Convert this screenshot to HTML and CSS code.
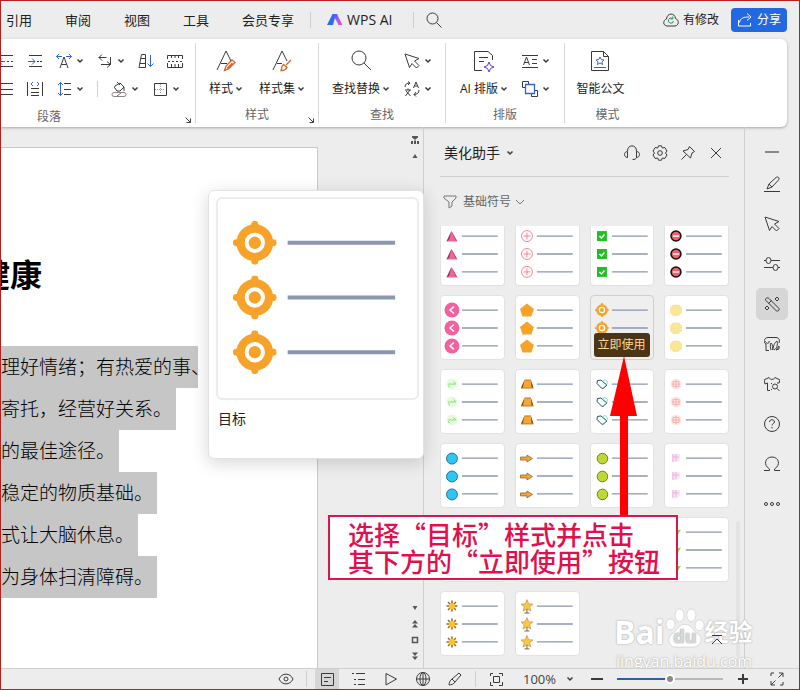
FILE: index.html
```
<!DOCTYPE html>
<html lang="zh-CN">
<head>
  <meta charset="UTF-8">
  <meta name="viewport" content="width=device-width, initial-scale=1.0">
  <title>美化助手</title>
  <link rel="stylesheet" href="styles.css">
</head>
<body>
  <!-- shared symbols -->
  <svg class="sprite" aria-hidden="true">
    <symbol id="chev" viewBox="0 0 8 8"><path d="M1.500 2.500 4 5 6.500 2.500" stroke-width="1.500"/></symbol>
    <symbol id="search" viewBox="0 0 16 16"><circle cx="6.500" cy="6.500" r="5.500"/><path d="M10.500 10.500 15.500 15.500"/></symbol>
    <symbol id="cursor" viewBox="0 0 16 16"><path d="M1 1 15 5.500 10.500 8 15 12.500 12.500 15 8 10.500 5.500 14.500Z"/></symbol>
    <symbol id="s-triangle" viewBox="0 0 16 16"><path d="M7.500 3 13.500 13.500H2.500Z" fill="#f0649a"/><path d="M7.500 3 2.500 13.500 5 12Z" fill="#8e3558"/><path d="M7.500 3 13.500 13.500 11 12Z" fill="#c64e80"/></symbol>
    <symbol id="s-plus" viewBox="0 0 16 16"><g fill="none" stroke="#f0858c"><circle cx="8" cy="8" r="5.500"/><path d="M8 4.500V11.500M4.500 8H11.500"/></g></symbol>
    <symbol id="s-check" viewBox="0 0 16 16"><path d="M3 3H13V13H3Z" fill="#1fc01f"/><path d="M5.500 8 7.500 10 10.500 6.500" fill="none" stroke="#fff" stroke-width="1.500"/></symbol>
    <symbol id="s-minus" viewBox="0 0 16 16"><circle cx="8" cy="8" r="5" fill="#f0606a" stroke="#1b0d0d" stroke-width="1.500"/><path d="M5 8H11" stroke="#fff" stroke-width="1.500"/></symbol>
    <symbol id="s-left" viewBox="0 0 16 16"><circle cx="8" cy="8" r="7.500" fill="#f2609f"/><path d="M10 4.500 6 8 10 11.500" fill="none" stroke="#fff" stroke-width="1.500"/></symbol>
    <symbol id="s-penta" viewBox="0 0 16 16"><path d="M8 1.500 15 7 12.500 14.500H3.500L1 7Z" fill="#f7a229"/></symbol>
    <symbol id="s-target" viewBox="0 0 44 44"><g fill="#f7a229"><circle cx="22" cy="22" r="18.500"/><circle cx="22" cy="3.500" r="3.500"/><circle cx="22" cy="40.500" r="3.500"/><circle cx="3.500" cy="22" r="3.500"/><circle cx="40.500" cy="22" r="3.500"/></g><circle cx="22" cy="22" r="8.200" fill="none" stroke="#fff" stroke-width="4"/></symbol>
    <symbol id="s-hex" viewBox="0 0 16 16"><path d="M5 3H11L13.500 6V10.500L10.500 13.500H5L2.500 10.500V6Z" fill="#fbe596" stroke="#f3dc8d" stroke-width=".6"/></symbol>
    <symbol id="s-leaf" viewBox="0 0 16 16"><circle cx="8" cy="8" r="5.500" fill="#e6fbdc"/><path d="M4 8H12M9.500 5.500 12 8M4 9.500 6 11" fill="none" stroke="#8ddc7a"/></symbol>
    <symbol id="s-trap" viewBox="0 0 16 16"><path d="M5.500 4H12L14.500 12H2Z" fill="#f8a63a"/><path d="M5.500 4 2 12 4 11.500ZM12 4 14.500 12 12.500 11Z" fill="#7a4c14"/><path d="M5.500 4H12M2 12H14.500" stroke="#b97821"/></symbol>
    <symbol id="s-heart" viewBox="0 0 16 16"><path d="M3 7.500 3.500 4.500 7 4 13 9 9 12.500 7.500 12Z" fill="#f0fffb" stroke="#24505a"/><path d="M8.500 5 11 3.500 13.500 5.500 13 8.500" fill="none" stroke="#7fe0c8"/></symbol>
    <symbol id="s-face" viewBox="0 0 16 16"><circle cx="8" cy="8" r="5.500" fill="#fde6e4"/><path d="M5 5.500H11V10.500H5ZM4 8H12M8 4V12" fill="none" stroke="#f5aaa6" stroke-width=".8"/></symbol>
    <symbol id="s-blue" viewBox="0 0 16 16"><circle cx="8" cy="8.500" r="5.500" fill="#2dc6f5" stroke="#2a7390"/></symbol>
    <symbol id="s-arrow" viewBox="0 0 16 16"><path d="M1.500 7H8V5L13.500 8.500 8 12V10H1.500Z" fill="#f5a53a" stroke="#9a6422" stroke-width=".8"/></symbol>
    <symbol id="s-lime" viewBox="0 0 16 16"><circle cx="8.500" cy="8.500" r="5.300" fill="#bdd935" stroke="#6d7c28"/></symbol>
    <symbol id="s-pink" viewBox="0 0 16 16"><path d="M4 4H12V10L9 12H4Z" fill="#fbe4f6"/><path d="M5 4V12M8 4V11M5 7H11" fill="none" stroke="#eeaee0"/></symbol>
    <symbol id="s-green" viewBox="0 0 16 16"><path d="M3 8 13 5.500 10 11Z" fill="#8ccf5e"/></symbol>
    <symbol id="s-sun" viewBox="0 0 16 16"><path d="M8 2.500V13.500M2.500 8H13.500M4 4 12 12M12 4 4 12" stroke="#9b6420" stroke-width="1.500"/><circle cx="8" cy="8" r="3.200" fill="#fcc22c"/></symbol>
    <symbol id="s-star" viewBox="0 0 16 16"><path d="M8 1.500 9.800 5.800 14 6 10.700 9 12 13 8 11 4 13 5.300 9 2 6 6.200 5.800Z" fill="#fbc54c" stroke="#b58a3a" stroke-width=".6"/><path d="M8 11V15M5.500 15H10.500" stroke="#75684c"/></symbol>
  </svg>

  <div class="app">
    <header class="topbar">
      <nav class="menu">
        <a href="#">引用</a>
        <a href="#">审阅</a>
        <a href="#">视图</a>
        <a href="#">工具</a>
        <a href="#">会员专享</a>
      </nav>
      <a href="#" class="wps-ai">
        <svg width="16" height="14" viewBox="0 0 16 14"><defs><linearGradient id="ai" x1="0" x2="1" y1="0" y2="1"><stop offset="0" stop-color="#3b5cf5"/><stop offset=".5" stop-color="#a05cf5"/><stop offset="1" stop-color="#fb4fa6"/></linearGradient></defs><path d="M5.500 1H9L6 12H0Z" fill="#2d6df6"/><path d="M5.500 1H10L15.500 12H11.500L9 7Z" fill="url(#ai)"/></svg>
        WPS AI
      </a>
      <button class="tool search" aria-label="搜索"><svg class="i16"><use href="#search"/></svg></button>
      <span class="saved">
        <svg class="i16" viewBox="0 0 16 16"><path d="M4 14C-.5 13.500 0 8 3.500 7 4 .5 12 .5 12.500 6.500 16.500 8 16 13.500 12 14Z"/><g stroke="#1c9b5e"><path d="M10.500 9A2.600 2.600 0 1 1 9.500 6.500M9.800 4.500V7H7.500"/></g></svg>
        有修改
      </span>
      <button class="share">
        <svg class="i16" viewBox="0 0 16 16"><path d="M1.500 8V14H13.500V11M2.500 10.500C3 6 7 5 12 5M10 1.500 14 5 10 8.500"/></svg>
        分享
      </button>
    </header>

    <section class="ribbon">
      <div class="group paragraph">
        <div class="row">
          <button class="tool" aria-label="减少缩进"><svg class="i16" viewBox="0 0 16 16"><path d="M2 2.500H15M9 8.500H11M13 8.500H15M2 13.500H15"/><path class="blue" d="M1 8.500H7M4 5.500 1 8.500 4 11.500"/></svg></button>
          <button class="tool" aria-label="增加缩进"><svg class="i16" viewBox="0 0 16 16"><path d="M2 2.500H15M10 8.500H12M13 8.500H15M2 13.500H15"/><path class="blue" d="M1 8.500H8M5 5.500 8 8.500 5 11.500"/></svg></button>
          <button class="tool" aria-label="字符缩放"><svg class="i16" viewBox="0 0 16 16"><path d="M4 15 8 4 12 15M5.500 11.500H10.500"/><path class="blue" d="M6 3.500H.5M3 1 .5 3.500 3 6M10 3.500H15.500M13 1 15.500 3.500 13 6"/></svg><svg class="chev"><use href="#chev"/></svg></button>
          <button class="tool" aria-label="换行"><svg class="i16" viewBox="0 0 16 16"><path d="M5 1.500 2 4.500 5 7.500M2 4.500H9.500M13.500 4V11.500H4M10 8.500 13.500 11.500 10 14.500"/></svg><svg class="chev"><use href="#chev"/></svg></button>
          <button class="tool" aria-label="排序"><svg class="i16" viewBox="0 0 16 16"><path d="M1 14.500 3.500 1.500H7.500V14.500ZM3 5.500H7.500M2 10.500H7.500"/><path class="blue" d="M12.500 2V13.500M9.500 10.500 12.500 13.500 15.500 10.500"/></svg></button>
          <button class="tool" aria-label="制表位"><svg class="i16" viewBox="0 0 16 16"><path d="M.5 6V2.500H15.500V6M.5 10V14.500H15.500V10M4.500 2V5M8 2V5M11.500 2V5M4.500 11V14M8 11V14M11.500 11V14M1 8.500H3M5 8.500H7M9 8.500H11M13 8.500H15"/></svg></button>
        </div>
        <div class="row">
          <button class="tool" aria-label="两端对齐"><svg class="i16" viewBox="0 0 16 16"><path d="M2 2.500H15M2 8.500H15M2 13.500H15"/></svg></button>
          <button class="tool" aria-label="分散对齐"><svg class="i16" viewBox="0 0 16 16"><path d="M.5 1V15M15.500 1V15M4 7.500H12M4 11.500H12M4 14.500H12"/><path class="blue" d="M6 1 4 3 6 5M10 1 12 3 10 5"/></svg></button>
          <button class="tool" aria-label="行距"><svg class="i16" viewBox="0 0 16 16"><path d="M8 2.500H15M8 8.500H15M8 13.500H15"/><path class="blue" d="M4.500 1.500V14.500M2 4 4.500 1.500 7 4M2 12 4.500 14.500 7 12"/></svg><svg class="chev"><use href="#chev"/></svg></button>
          <span class="sep"></span>
          <button class="tool" aria-label="底纹"><svg class="i16" viewBox="0 0 16 16"><path d="M4 5 9 2 13 6 9 10H6L3.500 6.500ZM6 1 9 4M13 6V10"/><rect x="1" y="11.500" width="14" height="4" rx="2" stroke="#888"/><path d="M6 15 10 12" stroke="#e05050"/></svg><svg class="chev"><use href="#chev"/></svg></button>
          <button class="tool" aria-label="边框"><svg class="i16" viewBox="0 0 16 16"><path d="M2.500 2.500H14.500V14.500H2.500Z"/><path d="M8.500 3V13M3 8.500H13" stroke="#999" stroke-dasharray="1 1"/></svg><svg class="chev"><use href="#chev"/></svg></button>
        </div>
        <h2>段落</h2>
        <svg class="launcher" viewBox="0 0 8 8"><path d="M1.500 1.500 6 6M6.500 2.500V6.500H2.500"/></svg>
      </div>

      <div class="group styles">
        <div class="bigs">
          <button class="big"><svg class="i24" viewBox="0 0 24 24"><path d="M3 21 12 2 17 12M7 14.500H13"/><path class="orange" stroke-width="1.300" d="M10.500 21.500 12 17 18 11 21 13.500 14.500 20ZM13 19.500 18.500 14"/></svg><span>样式<svg class="chev"><use href="#chev"/></svg></span></button>
          <button class="big"><svg class="i24" viewBox="0 0 24 24"><path d="M3 21 12 2 17 12M7 14.500H12"/><path class="orange" stroke-width="1.300" d="M21 11 16 16M13.500 15.500 17 18.500C16 21.500 13 21.500 11 21.500 12 19.500 11 17.500 13.500 15.500Z"/></svg><span>样式集<svg class="chev"><use href="#chev"/></svg></span></button>
        </div>
        <h2>样式</h2>
        <svg class="launcher" viewBox="0 0 8 8"><path d="M1.500 1.500 6 6M6.500 2.500V6.500H2.500"/></svg>
      </div>

      <div class="group find">
        <div class="bigs">
          <button class="big"><svg class="i24" viewBox="0 0 24 24"><circle cx="10" cy="9" r="7"/><path d="M15 14 22 21"/></svg><span>查找替换<svg class="chev"><use href="#chev"/></svg></span></button>
          <div class="stack">
            <button class="tool" aria-label="选择"><svg class="i16"><use href="#cursor"/></svg><svg class="chev"><use href="#chev"/></svg></button>
            <button class="tool" aria-label="翻译"><svg class="i16" viewBox="0 0 16 16"><path d="M1 6C1 3 3 2 6 2M4 .5 6 2 4 4M9.500 7 12 1 14.500 7M10.500 5H13.500M1 9H7M4 7.500V9M6 9 1.500 15M2 10 6.500 15M15 9C15 12 13 13.500 10 13.500M12 11 10 13.500 12 15.500"/></svg><svg class="chev"><use href="#chev"/></svg></button>
          </div>
        </div>
        <h2>查找</h2>
      </div>

      <div class="group typeset">
        <div class="bigs">
          <button class="big"><svg class="i24" viewBox="0 0 24 24"><path d="M10 21.500H2.500V2.500H16L20.500 6.500V11M7 8.500H16M7 12.500H12"/><path stroke="#6a35d8" d="M17 13 18.500 16.500 22 18 18.500 19.500 17 23 15.500 19.500 12 18 15.500 16.500Z"/></svg><span>AI 排版<svg class="chev"><use href="#chev"/></svg></span></button>
          <div class="stack">
            <button class="tool" aria-label="文字排版"><svg class="i16" viewBox="0 0 16 16"><path d="M0 2.500H16M0 14.500H16M1.500 12 4.500 4 7.500 12M2.500 9.500H6.500M10 6.500H15M10 10.500H15"/></svg><svg class="chev"><use href="#chev"/></svg></button>
            <button class="tool" aria-label="对象排列"><svg class="i16" viewBox="0 0 16 16"><path d="M3 6.500H.5V.5H6.500V3M12 9.500H15.500V15.500H9.500V13"/><path class="blue" stroke-width="1.300" d="M3.500 3.500H12.500V12.500H3.500Z"/></svg><svg class="chev"><use href="#chev"/></svg></button>
          </div>
        </div>
        <h2>排版</h2>
      </div>

      <div class="group mode">
        <div class="bigs">
          <button class="big"><svg class="i24" viewBox="0 0 24 24"><path d="M3.500 2.500H15.500L20.500 7.500V21.500H3.500ZM15.500 2.500V7.500H20.500"/><path class="blue" d="M12 8 13.300 10.500 16 11 14 12.800 14.500 15.500 12 14 9.500 15.500 10 12.800 8 11 10.700 10.500ZM6 18.500H18"/></svg><span>智能公文</span></button>
        </div>
        <h2>模式</h2>
      </div>
    </section>

    <main class="workspace">
      <section class="canvas">
        <article class="page">
          <h1>健康</h1>
          <p>理好情绪；有热爱的事、</p>
          <p>寄托，经营好关系。</p>
          <p>的最佳途径。</p>
          <p>稳定的物质基础。</p>
          <p>式让大脑休息。</p>
          <p>为身体扫清障碍。</p>
        </article>
        <div class="scroll">
          <svg width="8" height="8" viewBox="0 0 8 8"><path d="M1 0H7V1.500L5 3H3L1 1.500ZM3.500 3H4.500V5H3.500ZM0 5H2V8H0ZM3 5H5V8H3ZM6 5H8V8H6Z"/></svg>
          <svg width="8" height="8" viewBox="0 0 8 8"><path d="M4 2 6.500 6H1.500Z"/></svg>
          <span class="track"></span>
          <svg width="8" height="8" viewBox="0 0 8 8"><path d="M4 6 6.500 2H1.500Z"/></svg>
          <svg width="8" height="8" viewBox="0 0 8 8"><path d="M4 0 7 3.500H1ZM4 4 7 7.500H1Z"/></svg>
          <svg width="8" height="8" viewBox="0 0 8 8"><path d="M1.500 1.500H6.500V6.500H1.500Z" fill="none" stroke="#555" stroke-width="1.500"/></svg>
          <svg width="8" height="8" viewBox="0 0 8 8"><path d="M4 4 7 .5H1ZM4 8 7 4.500H1Z"/></svg>
        </div>
        <div class="preview">
          <svg viewBox="0 0 200 200">
            <g id="preview-rows"></g>
          </svg>
          <strong>目标</strong>
        </div>
      </section>

      <aside class="pane">
        <div class="pane-head">
          <button class="pane-title">美化助手<svg class="chev"><use href="#chev"/></svg></button>
          <button class="tool" aria-label="客服"><svg class="i16" viewBox="0 0 16 16"><path d="M3.500 7V12.500C-.5 12.500-.5 6.500 3.500 6.500 3-1 13-1 12.500 6.500 16.500 6.500 16.500 12.500 12.500 12.500V6.500M12.500 12.500C12 14 11 14.500 8.500 14.500"/></svg></button>
          <button class="tool" aria-label="设置"><svg class="i16" viewBox="0 0 16 16"><path d="M6.500 .8H9.500L10.300 3 12.800 2.500 15 6 13.500 8 15 10 12.800 13.500 10.300 13 9.500 15.200H6.500L5.700 13 3.200 13.500 1 10 2.500 8 1 6 3.200 2.500 5.700 3Z"/><circle cx="8" cy="8" r="2.300"/></svg></button>
          <button class="tool" aria-label="固定"><svg class="i16" viewBox="0 0 16 16"><path d="M9.500 1.500 14.500 6.500 12 8 10.500 13 3 6 8 4.500ZM6.500 9.500 1.500 14.500"/></svg></button>
          <button class="tool" aria-label="关闭"><svg class="i16" viewBox="0 0 16 16"><path d="M3 3 13 13M13 3 3 13"/></svg></button>
        </div>
        <button class="filter"><svg class="i16" viewBox="0 0 16 16"><path d="M2 2H14V4L10 8V12L7 14V8L2 4Z"/></svg>基础符号<svg class="chev thin" viewBox="0 0 8 8"><path d="M0 2 4 6 8 2"/></svg></button>
        <div class="cards" id="cards"></div>
        <span class="thumb"></span>
        <svg class="arrow" viewBox="0 0 28 160"><path d="M14 0 27 60H18V160H10V60H0Z"/></svg>
        <div class="callout">选择“目标”样式并点击<br>其下方的“立即使用”按钮</div>
        <div class="watermark">
          <div class="brand">
            <span>Bai</span>
            <svg width="40" height="44" viewBox="0 0 44 44"><ellipse cx="6" cy="18" rx="5" ry="6"/><ellipse cx="16" cy="8" rx="5" ry="7"/><ellipse cx="29" cy="8" rx="5" ry="7"/><ellipse cx="38" cy="19" rx="5" ry="6"/><path d="M22 18C30 18 30 25 37 29 43 34 38 43 31 43H12C4 43 2 34 7 29 14 25 14 18 22 18Z"/><text x="22" y="39" text-anchor="middle">du</text></svg>
            <span class="cn">经验</span>
          </div>
          <span class="url">jingyan.baidu.com</span>
        </div>
        <svg class="to-top i16" viewBox="0 0 16 16"><path d="M3 3.500H13M3 12 8 7 13 12"/></svg>
      </aside>

      <nav class="side">
        <button class="fold" aria-label="收起"><svg class="i16" viewBox="0 0 16 16"><path d="M1 8H15" stroke="#888" stroke-width="2"/></svg></button>
        <button aria-label="格式"><svg class="i16" viewBox="0 0 16 16"><path d="M0 15.500H16M3 13 5 8 12 1.500C14 0 16 2 14.500 4L8 11ZM5 8 8 11"/></svg></button>
        <button aria-label="选择"><svg class="i16"><use href="#cursor"/></svg></button>
        <button aria-label="属性"><svg class="i16" viewBox="0 0 16 16"><path d="M0 4.500H2M7 4.500H16M0 11.500H9M14 11.500H16"/><ellipse cx="4.500" cy="4.500" rx="2.500" ry="3"/><ellipse cx="11.500" cy="11.500" rx="2.500" ry="3"/></svg></button>
        <button class="on" aria-label="美化"><svg class="i16" viewBox="0 0 16 16"><path d="M1.500 4C1.500 2 3.500 1 5 2.500L15 12.500C15.500 14.500 14 15.500 12.500 15L2.500 5ZM4.500 7.500 7.500 4.500M13 1 15 3 13 5 11 3ZM3 10 5 12 3 14 1 12Z"/></svg></button>
        <button aria-label="素材"><svg class="i16" viewBox="0 0 16 16"><path d="M5 14.500H2V8C-1 7 0 1.500 4 1.500H12C15 1.500 16 4 15 7M1 5C3 9 6 7 5 5M7 14C6 11 6 9 7 7 9 9 9 12 8 14M9 14C9 10 11 6 13 5 14 9 13 12 10 14M12 14 15 10V13L12 14"/></svg></button>
        <button aria-label="主题"><svg class="i16" viewBox="0 0 16 16"><path d="M6 14.500H3.500V7L1 8 0 4 5 1.500C6 4 10 4 11 1.500L16 4 15 7 13 7"/><circle cx="11" cy="10.500" r="2.500"/><path d="M13 12.500 15.500 15M8 8 7 7M8 13 7 14"/></svg></button>
        <button aria-label="帮助"><svg class="i16" viewBox="0 0 16 16"><circle cx="8" cy="8" r="7.500"/><path d="M5.500 6C5.500 3 10.500 3 10.500 6 10.500 7.500 8 7.500 8 9.500M8 11V12.500"/></svg></button>
        <button aria-label="符号"><svg class="i16" viewBox="0 0 16 16"><path d="M0 14.500H5.500V13C-1 9 1 1 8 1S17 9 10.500 13V14.500H16"/></svg></button>
        <button aria-label="更多"><svg class="i16" viewBox="0 0 16 16"><circle cx="2" cy="8" r="1.500"/><circle cx="8" cy="8" r="1.500"/><circle cx="14" cy="8" r="1.500"/></svg></button>
      </nav>
    </main>

    <footer class="status">
      <button aria-label="护眼"><svg class="i16" viewBox="0 0 16 16"><path d="M1 8C4 1.500 12 1.500 15 8 12 14.500 4 14.500 1 8Z"/><circle cx="8" cy="8" r="2"/></svg></button>
      <span class="sep"></span>
      <button class="on" aria-label="页面视图"><svg class="i16" viewBox="0 0 16 16"><path d="M2.500 2.500H14.500V14.500H2.500ZM5 6.500H12M5 10.500H9"/></svg></button>
      <button aria-label="大纲"><svg class="i16" viewBox="0 0 16 16"><path d="M1 2.500H3M5 2.500H14M3 8.500H5M7 8.500H14M3 13.500H5M7 13.500H14"/></svg></button>
      <button aria-label="阅读"><svg class="i16" viewBox="0 0 16 16"><path d="M3 2.500 13.500 8 3 14Z"/></svg></button>
      <button aria-label="网页"><svg class="i16" viewBox="0 0 16 16"><circle cx="8" cy="8" r="6.500"/><ellipse cx="8" cy="8" rx="3" ry="6.500"/><path d="M1.500 8H14.500M8 1.500V14.500"/></svg></button>
      <button aria-label="写作"><svg class="i16" viewBox="0 0 16 16"><path d="M2 14C2 12 3 9 5 8L12 2 14 4 8 11C7 13 4 14 2 14ZM5 8 8 11"/></svg></button>
      <span class="sep"></span>
      <button aria-label="适合页宽"><svg class="i16" viewBox="0 0 16 16"><path d="M2.500 5V2.500H5M11 2.500H14.500V5M14.500 11V14.500H11M5 14.500H2.500V11M5.500 5.500H11.500V11.500H5.500Z"/></svg></button>
      <button class="zoom">100%<svg class="chev"><use href="#chev"/></svg></button>
      <button aria-label="缩小"><svg class="i16" viewBox="0 0 16 16"><path d="M2 8H14" stroke-width="2"/></svg></button>
      <input type="range" min="0" max="100" value="50" aria-label="缩放">
      <button aria-label="放大"><svg class="i16" viewBox="0 0 16 16"><path d="M3 8H13M8 3V13" stroke-width="2"/></svg></button>
      <button class="full" aria-label="全屏"><svg class="i16" viewBox="0 0 16 16"><path d="M10 2H14V6M14 2 9.500 6.500M2 5V2H5M6 14H2V10M2 14 6.500 9.500M14 11V14H11"/></svg></button>
    </footer>
  </div>

  <script>
  const symbols = [
    "triangle", "plus", "check", "minus",
    "left", "penta", "target", "hex",
    "leaf", "trap", "heart", "face",
    "blue", "arrow", "lime", "pink",
    "green", "green", "green", "green",
    "sun", "star"
  ];

  // three bullets, each with a text line beside it
  function rows(name, size, cx, ys, x1, x2, stroke) {
    return ys.map((y) => `
      <use href="#s-${name}" x="${cx - size / 2}" y="${y - size / 2}" width="${size}" height="${size}"/>
      <path class="rule" d="M${x1} ${y}H${x2}" stroke-width="${stroke}"/>`).join("");
  }

  document.getElementById("cards").innerHTML = symbols.map((name) => `
    <div class="card ${name === "target" ? "hover" : ""}">
      <svg viewBox="0 0 63 63">${rows(name, name === "target" ? 14 : 16, 11, [14, 32, 50], 21, 57, 1.3)}</svg>
      ${name === "target" ? '<button class="use">立即使用</button>' : ""}
    </div>`).join("");

  document.getElementById("preview-rows").innerHTML =
    rows("target", 44, 37, [44, 99, 154], 70, 178, 4);
  </script>
</body>
</html>
```

FILE: styles.css
```
* {
  box-sizing: border-box;
}
body {
  margin: 0;
  font-family: "Open Sans", "Noto Sans CJK SC", sans-serif;
  font-size: 12px;
  line-height: 16px;
  color: #222;
  background: #ededed;
}
button {
  margin: 0;
  padding: 0;
  border: none;
  background: none;
  font: inherit;
  color: inherit;
  cursor: pointer;
}
a {
  color: inherit;
  text-decoration: none;
}
svg {
  display: block;
  flex: none;
}
.sprite {
  position: absolute;
  width: 0;
  height: 0;
}
.i16, .i24, .chev, .launcher {
  fill: none;
  stroke: #3a3a3a;
}
.i16 {
  width: 16px;
  height: 16px;
}
.i24 {
  width: 24px;
  height: 24px;
}
.chev {
  width: 8px;
  height: 8px;
}
.blue {
  stroke: #3563d6;
}
.orange {
  stroke: #d9642a;
}
.app {
  display: flex;
  flex-direction: column;
  min-height: 100vh;
  border: 1px solid #b5201f;
  overflow: hidden;
}

/* top bar */
.topbar {
  display: flex;
  align-items: center;
  height: 38px;
  padding: 0 12px 0 5px;
}
.menu {
  display: flex;
  gap: 33px;
  font-size: 13px;
  padding-right: 16px;
  border-right: 1px solid #cfcfcf;
}
.wps-ai {
  display: flex;
  align-items: center;
  gap: 4px;
  padding: 0 20px 0 16px;
  border-right: 1px solid #cfcfcf;
  font-size: 14px;
}
.tool {
  display: flex;
  align-items: center;
  gap: 4px;
}
.search {
  margin-left: 12px;
}
.saved {
  display: flex;
  align-items: center;
  gap: 4px;
  margin-left: auto;
}
.share {
  display: flex;
  align-items: center;
  justify-content: center;
  gap: 4px;
  width: 56px;
  height: 24px;
  margin-left: 12px;
  border-radius: 4px;
  background: #2268e0;
  color: #fff;
}
.share svg {
  stroke: #fff;
}

/* ribbon */
.ribbon {
  display: flex;
  height: 88px;
  margin-right: 12px;
  padding: 4px 0;
  background: #fff;
  border-radius: 0 6px 6px 0;
  box-shadow: 0 1px 3px rgba(0, 0, 0, 0.3);
  position: relative;
}
.group {
  position: relative;
  display: flex;
  flex-direction: column;
  align-items: center;
  border-right: 1px solid #d8d8d8;
}
.group h2 {
  margin: auto 0 0;
  font-size: 12px;
  font-weight: normal;
  color: #666;
}
.group:last-child {
  border-right: none;
}
.paragraph {
  width: 195px;
  gap: 12px;
  padding-top: 10px;
}
.row {
  display: flex;
  align-items: center;
  gap: 13px;
  width: 100%;
  margin-left: -6px;
}
.paragraph h2 {
  align-self: flex-start;
  margin-left: 36px;
}
.styles {
  width: 123px;
}
.find {
  width: 127px;
}
.typeset {
  width: 119px;
}
.mode {
  width: 85px;
}
.bigs {
  display: flex;
  gap: 14px;
  padding-top: 6px;
}
.mode .bigs {
  padding-right: 14px;
}
.big {
  display: flex;
  flex-direction: column;
  align-items: center;
  gap: 8px;
  white-space: nowrap;
}
.big span {
  display: flex;
  align-items: center;
  gap: 2px;
}
.styles .bigs {
  gap: 16px;
}
.stack {
  display: flex;
  flex-direction: column;
  gap: 12px;
  padding-top: 4px;
}
.launcher {
  position: absolute;
  right: 3px;
  bottom: -1px;
  width: 8px;
  height: 8px;
}
.sep {
  width: 1px;
  height: 16px;
  background: #cfcfcf;
}

/* document */
.workspace {
  flex: 1;
  display: flex;
}
.canvas {
  position: relative;
  flex: 1;
  display: flex;
  justify-content: space-between;
  padding-top: 20px;
  border-right: 1px solid #cfcfcf;
}
.page {
  width: 317px;
  padding-top: 103px;
  background: #fff;
  border: 1px solid #c9c9c9;
  border-width: 1px 1px 0 0;
  overflow: hidden;
}
.page h1 {
  margin: 0 0 47px -23px;
  font-size: 32px;
  line-height: 48px;
  color: #000;
}
.page p {
  width: fit-content;
  margin: 0;
  padding-right: 4px;
  background: #c6c6c6;
  font-size: 19px;
  font-weight: 300;
  line-height: 42px;
  white-space: nowrap;
  color: #000;
}
.page h1 + p {
  width: 197px;
  padding: 0;
}
.scroll {
  display: flex;
  flex-direction: column;
  gap: 8px;
  width: 8px;
  margin: -11px 4px 8px 0;
  fill: #555;
}
.track {
  flex: 1;
}
.preview {
  position: absolute;
  top: 63px;
  right: -1px;
  width: 216px;
  height: 269px;
  padding: 6px 4px 7px 7px;
  background: #fff;
  border: 1px solid #e2e2e2;
  border-radius: 6px;
  box-shadow: 0 4px 18px rgba(0, 0, 0, 0.16);
}
.preview svg {
  width: 100%;
  border: 2px solid #ececec;
  border-radius: 6px;
}
.preview strong {
  display: block;
  margin: 9px 2px 0;
  font-size: 14px;
  font-weight: normal;
  line-height: 20px;
}
.rule {
  stroke: #8a97af;
}

/* side pane */
.pane {
  position: relative;
  width: 321px;
  padding: 10px 15px 12px 16px;
  border-right: 1px solid #cfcfcf;
}
.pane-head {
  display: flex;
  align-items: center;
  gap: 12px;
  height: 40px;
  padding: 0 5px 8px 4px;
  border-bottom: 1px solid #cfcfcf;
}
.pane-title {
  display: flex;
  align-items: center;
  gap: 6px;
  margin-right: auto;
  font-size: 14px;
}
.filter {
  display: flex;
  align-items: center;
  gap: 5px;
  height: 49px;
  padding-left: 2px;
  color: #666;
}
.filter svg {
  stroke: #777;
}
.cards {
  display: grid;
  grid-template-columns: repeat(4, 1fr);
  gap: 9px 10px;
  overflow: hidden;
}
.card {
  position: relative;
  height: 65px;
  background: #fff;
  border: 1px solid #e2e2e2;
  border-radius: 4px;
}
.card:nth-child(-n+4) {
  display: flex;
  align-items: flex-end;
  height: 60px;
  border-top: none;
  border-radius: 0 0 4px 4px;
}
.card svg {
  width: 100%;
  height: 63px;
}
.card.hover {
  background: #efefef;
  border-color: #cfcfcf;
}
.use {
  position: absolute;
  left: 3px;
  bottom: 2px;
  width: 56px;
  height: 24px;
  border-radius: 3px;
  background: #4b3517;
  color: #ffd68f;
}
.thumb {
  position: absolute;
  right: 4px;
  bottom: 11px;
  width: 4px;
  height: 136px;
  border-radius: 2px;
  background: #e3e3e3;
}
.arrow {
  position: absolute;
  top: 229px;
  right: 106px;
  width: 28px;
  height: 160px;
  fill: #f00;
}
.callout {
  position: absolute;
  top: 388px;
  right: 66px;
  padding: 3px 16px 4px 18px;
  border: 2px solid #d8174f;
  background: #fff;
  color: #e0104c;
  font-family: "Noto Sans CJK SC", sans-serif;
  font-size: 26px;
  font-weight: 500;
  line-height: 27px;
  white-space: nowrap;
}
.watermark {
  position: absolute;
  right: -12px;
  bottom: -4px;
  width: 142px;
  color: #fff;
  text-shadow: 0 0 2px #aaa, 0 0 1px #bbb;
  white-space: nowrap;
}
.brand {
  display: flex;
  align-items: flex-end;
  height: 46px;
  font-size: 32px;
  font-weight: bold;
  line-height: 36px;
}
.brand svg {
  fill: #fff;
  stroke: #d5d5d5;
  overflow: visible;
}
.brand text {
  font-size: 20px;
  fill: #d8d8d8;
  stroke: none;
}
.brand .cn {
  font-size: 24px;
}
.url {
  display: block;
  padding-left: 2px;
  font-size: 16px;
  line-height: 22px;
}
.to-top {
  position: absolute;
  right: 19px;
  bottom: 20px;
}

/* right tool strip */
.side {
  display: flex;
  flex-direction: column;
  align-items: center;
  gap: 8px;
  width: 54px;
  padding-top: 17px;
}
.side button {
  display: grid;
  place-items: center;
  width: 32px;
  height: 32px;
  border-radius: 5px;
}
.side .fold {
  height: 16px;
}
.side .on, .status .on {
  background: #d6d6d6;
}

/* status bar */
.status {
  display: flex;
  align-items: center;
  justify-content: flex-end;
  gap: 8px;
  height: 21px;
  padding-right: 10px;
  border-top: 1px solid #cfcfcf;
  background: #ededed;
  position: relative;
}
.status button {
  display: flex;
  align-items: center;
  justify-content: center;
  width: 24px;
  height: 20px;
}
.status .zoom {
  justify-content: space-between;
  width: 51px;
  margin: 0 3px 0 7px;
  font-size: 13px;
  color: #444;
}
.status .full {
  margin-left: 2px;
}
.status input {
  appearance: none;
  width: 106px;
  height: 2px;
  margin: 0;
  background: linear-gradient(90deg, #2c5fa8 50%, #b8b8b8 50%);
}
.status input::-webkit-slider-thumb {
  appearance: none;
  width: 10px;
  height: 10px;
  border: 2px solid #fff;
  border-radius: 50%;
  background: #8a8a8a;
}
```
